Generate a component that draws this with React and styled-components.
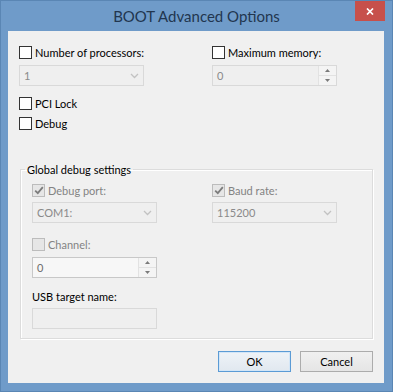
import React from 'react';
import styled, { createGlobalStyle } from 'styled-components';

const GlobalStyle = createGlobalStyle`
  html, body { margin: 0; padding: 0; background: #6b98c7; }
  body { font-family: Lato, "Open Sans", sans-serif; }
`;

const Frame = styled.div`
  width: 393px;
  height: 392px;
  background: #6f9bc9;
  border: 1px solid #5a86b4;
  box-sizing: border-box;
  display: flex;
  flex-direction: column;
`;

const TitleBar = styled.div`
  height: 30px;
  display: grid;
  grid-template-columns: 1fr auto 1fr;
  align-items: start;
`;

const Title = styled.div`
  grid-column: 2;
  font-family: Lato, "Open Sans", sans-serif;
  font-size: 15px;
  line-height: 31px;
  color: #22364f;
`;

const CloseCell = styled.div`
  grid-column: 3;
  display: flex;
  justify-content: flex-end;
  padding-right: 7px;
`;

const CloseButton = styled.div`
  width: 30px;
  height: 20px;
  background: #c7504b;
  display: flex;
  align-items: center;
  justify-content: center;
`;

const Client = styled.div`
  flex: 1;
  margin: 0 8px 8px 7px;
  background: #f0f0f0;
  display: flex;
  flex-direction: column;
  font-family: Lato, "Open Sans", sans-serif;
  font-size: 11px;
  color: #000;
`;

const TopRow = styled.div`
  display: flex;
  padding: 15px 0 0 11px;
`;

const Column = styled.div`
  width: ${p => p.$width}px;
  display: flex;
  flex-direction: column;
  align-items: flex-start;
`;

const Label = styled.label`
  display: flex;
  align-items: center;
  gap: 3px;
  height: 13px;
  margin-top: ${p => p.$top || 0}px;
  line-height: 13px;
  white-space: nowrap;
  color: ${p => (p.$disabled ? '#838383' : '#000')};
`;

const Box = styled.span`
  width: 11px;
  height: 11px;
  border: 1px solid ${p => (p.$disabled ? '#bcbcbc' : '#333')};
  background: ${p => (p.$disabled ? '#e6e6e6' : '#fff')};
  display: flex;
  align-items: center;
  justify-content: center;
  flex: none;
`;

const Field = styled.div`
  width: 125px;
  height: 21px;
  box-sizing: border-box;
  margin-top: ${p => p.$top || 6}px;
  border: 1px solid ${p => (p.$enabled ? '#c8c8c8' : '#d9d9d9')};
  background: ${p => (p.$enabled ? '#f7f7f7' : '#efefef')};
  display: flex;
  align-items: center;
  color: ${p => (p.$enabled ? '#6d6d6d' : '#8a8a8a')};
`;

const FieldText = styled.span`
  flex: 1;
  padding-left: 4px;
  line-height: 19px;
`;

const Chevron = styled.span`
  width: 17px;
  display: flex;
  justify-content: center;
`;

const Spin = styled.div`
  width: 17px;
  height: 19px;
  display: flex;
  flex-direction: column;
  border-left: 1px solid #e2e2e2;
`;

const SpinPart = styled.div`
  flex: 1;
  display: flex;
  align-items: center;
  justify-content: center;
  border-top: ${p => (p.$lower ? '1px solid #e2e2e2' : 'none')};
  background: #f4f4f4;
`;

const Group = styled.fieldset`
  margin: 33px 11px 0 12px;
  padding: 0 0 9px 11px;
  border: 1px solid #dcdcdc;
  box-shadow: inset 1px 1px 0 #fff, 1px 1px 0 #fff;
  min-width: 0;
  height: 176px;
  box-sizing: border-box;
`;

const Legend = styled.legend`
  padding: 0 2px;
  margin-left: -7px;
  font-size: 11px;
  line-height: 13px;
`;

const GroupRow = styled.div`
  display: flex;
  padding-top: 8px;
`;

const PlainLabel = styled.div`
  margin-top: 12px;
  line-height: 13px;
`;

const Footer = styled.div`
  display: flex;
  justify-content: flex-end;
  gap: 9px;
  padding: 12px 11px 0 0;
`;

const Button = styled.button`
  width: 73px;
  height: 21px;
  box-sizing: border-box;
  font-family: Lato, "Open Sans", sans-serif;
  font-size: 11px;
  color: #000;
  padding: 0;
  border: 1px solid ${p => (p.$primary ? '#5b9bd5' : '#acacac')};
  background: ${p =>
    p.$primary
      ? 'linear-gradient(#eef3f8, #e1e8ef)'
      : 'linear-gradient(#f0f0f0, #e5e5e5)'};
  box-shadow: ${p => (p.$primary ? 'inset 0 0 0 1px #d3e6f7' : 'none')};
`;

const ChevronIcon = () => (
  <svg width="9" height="6" viewBox="0 0 9 6">
    <polyline points="1,1 4.5,4.5 8,1" fill="none" stroke="#c2c2c2" strokeWidth="1.3" />
  </svg>
);

const Arrow = ({ up }) => (
  <svg width="5" height="3" viewBox="0 0 5 3">
    <polygon points={up ? '0,3 2.5,0 5,3' : '0,0 2.5,3 5,0'} fill="#7a7a7a" />
  </svg>
);

const Check = () => (
  <svg width="10" height="9" viewBox="0 0 10 9">
    <polyline points="1.2,4.6 3.8,7.2 8.8,1.2" fill="none" stroke="#7c7c7c" strokeWidth="1.8" />
  </svg>
);

const Checkbox = ({ label, checked, disabled, top }) => (
  <Label $disabled={disabled} $top={top}>
    <Box $disabled={disabled}>{checked && <Check />}</Box>
    {label}
  </Label>
);

const Select = ({ value, top }) => (
  <Field $top={top}>
    <FieldText>{value}</FieldText>
    <Chevron><ChevronIcon /></Chevron>
  </Field>
);

const Spinner = ({ value, enabled, top }) => (
  <Field $enabled={enabled} $top={top}>
    <FieldText>{value}</FieldText>
    <Spin>
      <SpinPart><Arrow up /></SpinPart>
      <SpinPart $lower><Arrow /></SpinPart>
    </Spin>
  </Field>
);

export default function App() {
  return (
    <>
      <GlobalStyle />
      <Frame>
        <TitleBar>
          <Title>BOOT Advanced Options</Title>
          <CloseCell>
            <CloseButton>
              <svg width="8" height="7" viewBox="0 0 8 7">
                <path d="M1 0.5 L7 6.5 M7 0.5 L1 6.5" stroke="#fff" strokeWidth="1.7" />
              </svg>
            </CloseButton>
          </CloseCell>
        </TitleBar>
        <Client>
          <TopRow>
            <Column $width={193}>
              <Checkbox label="Number of processors:" />
              <Select value="1" />
              <Checkbox label="PCI Lock" top={11} />
              <Checkbox label="Debug" top={7} />
            </Column>
            <Column $width={160}>
              <Checkbox label="Maximum memory:" />
              <Spinner value="0" />
            </Column>
          </TopRow>
          <Group>
            <Legend>Global debug settings</Legend>
            <GroupRow>
              <Column $width={180}>
                <Checkbox label="Debug port:" checked disabled />
                <Select value="COM1:" top={5} />
                <Checkbox label="Channel:" disabled top={15} />
                <Spinner value="0" enabled top={6} />
                <PlainLabel>USB target name:</PlainLabel>
                <Field $top={5} />
              </Column>
              <Column $width={150}>
                <Checkbox label="Baud rate:" checked disabled />
                <Select value="115200" top={5} />
              </Column>
            </GroupRow>
          </Group>
          <Footer>
            <Button $primary>OK</Button>
            <Button>Cancel</Button>
          </Footer>
        </Client>
      </Frame>
    </>
  );
}
